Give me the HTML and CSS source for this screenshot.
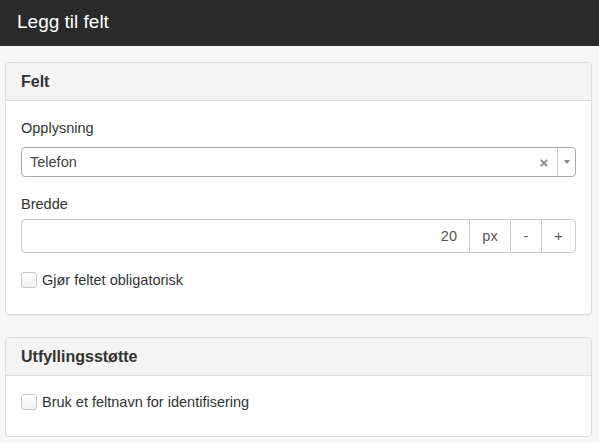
FILE: index.html
```html
<!DOCTYPE html>
<html lang="no">
<head>
<meta charset="utf-8">
<title>Legg til felt</title>
<link rel="stylesheet" href="styles.css">
</head>
<body>
<header class="topbar"><h1 class="topbar-title">Legg til felt</h1></header>
<main class="content">
  <section class="panel">
    <div class="panel-heading"><h2 class="panel-title">Felt</h2></div>
    <div class="panel-body">
      <label class="field-label first">Opplysning</label>
      <div class="select">
        <span class="select-value">Telefon</span>
        <span class="select-clear">×</span>
        <span class="select-arrow"><svg width="8" height="6" viewBox="0 0 8 6"><path d="M1 1h6L4 5z" fill="#888"/></svg></span>
      </div>
      <label class="field-label second">Bredde</label>
      <div class="input-group">
        <span class="input-value">20</span>
        <span class="addon addon-px">px</span>
        <span class="addon addon-btn">-</span>
        <span class="addon addon-btn">+</span>
      </div>
      <label class="check"><span class="checkbox"></span><span>Gjør feltet obligatorisk</span></label>
    </div>
  </section>
  <section class="panel">
    <div class="panel-heading"><h2 class="panel-title">Utfyllingsstøtte</h2></div>
    <div class="panel-body">
      <label class="check flush"><span class="checkbox"></span><span>Bruk et feltnavn for identifisering</span></label>
    </div>
  </section>
</main>
</body>
</html>
```
FILE: styles.css
```css
* { box-sizing: border-box; }
body {
  margin: 0;
  background: #f7f7f7;
  font-family: "Liberation Sans", Arial, sans-serif;
  font-size: 14.5px;
  color: #333;
}
.topbar {
  height: 46px;
  background: #2a2a2a;
  display: flex;
  align-items: center;
  padding: 0 17px;
}
.topbar-title {
  margin: 0;
  font-size: 19px;
  font-weight: normal;
  color: #fff;
  line-height: 22px;
  padding-bottom: 2px;
}
.content {
  padding: 16px 7px 0 5px;
  display: flex;
  flex-direction: column;
  gap: 22px;
}
.panel {
  background: #fff;
  border: 1px solid #dcdcdc;
  border-radius: 4px;
  box-shadow: 0 1px 1px rgba(0,0,0,0.04);
}
.panel-heading {
  background: #f4f4f4;
  border-bottom: 1px solid #dcdcdc;
  border-radius: 3px 3px 0 0;
  padding: 9px 15px 8px;
}
.panel-title {
  margin: 0;
  font-size: 16px;
  font-weight: bold;
  line-height: 20px;
  color: #333;
}
.panel-body {
  padding: 16px 15px 24px;
  display: flex;
  flex-direction: column;
}
.field-label {
  display: block;
  line-height: 20px;
}
.field-label.first { margin-top: 1px; margin-bottom: 9px; }
.field-label.second { margin-top: 17px; margin-bottom: 5px; }
.select {
  height: 30px;
  border: 1px solid #aaa;
  border-radius: 4px;
  display: flex;
  align-items: center;
  color: #444;
  background: #fff;
}
.select-value {
  flex: 1;
  padding-left: 8px;
}
.select-clear {
  width: 20px;
  text-align: center;
  color: #888;
  font-weight: bold;
  font-size: 15px;
  margin-right: 3px;
}
.select-arrow {
  width: 18px;
  height: 100%;
  border-left: 1px solid #ccc;
  display: flex;
  align-items: center;
  justify-content: center;
}
.input-group {
  height: 34px;
  border: 1px solid #ccc;
  border-radius: 4px;
  display: flex;
  color: #555;
  background: #fff;
}
.input-value {
  flex: 1;
  text-align: right;
  padding-right: 12px;
  line-height: 32px;
}
.addon {
  border-left: 1px solid #ccc;
  display: flex;
  align-items: center;
  justify-content: center;
}
.addon-px { width: 41px; }
.addon-btn { width: 31px; }
.addon-btn:last-child { width: 34px; }
.check {
  display: flex;
  align-items: center;
  gap: 5px;
  line-height: 20px;
  margin-top: 17px;
}
.check.flush { margin-top: 0; }
.checkbox {
  width: 16px;
  height: 16px;
  border: 1px solid #c8c8c8;
  border-radius: 3px;
  background: linear-gradient(#fff, #f2f2f2);
  flex: none;
}
```
